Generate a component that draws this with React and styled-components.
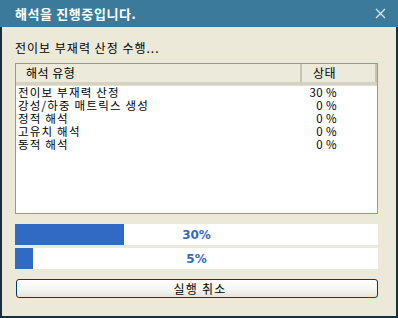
import styled, { createGlobalStyle } from 'styled-components'

const ROWS = [
  { name: '전이보 부재력 산정', status: '30 %' },
  { name: '강성/하중 매트릭스 생성', status: '0 %' },
  { name: '정적 해석', status: '0 %' },
  { name: '고유치 해석', status: '0 %' },
  { name: '동적 해석', status: '0 %' },
]

const KR = `"Noto Sans CJK KR", "DejaVu Sans", sans-serif`

const Global = createGlobalStyle`
  html, body { margin: 0; padding: 0; background: #ece9d8; }
`

const Window = styled.div`
  width: 398px;
  height: 318px;
  display: flex;
  flex-direction: column;
  font-family: ${KR};
  box-sizing: border-box;
`

const TitleBar = styled.div`
  height: 27px;
  flex: none;
  background: #3b7a9a;
  display: flex;
  align-items: center;
  justify-content: space-between;
  padding: 0 12px 1px 15px;
  box-sizing: border-box;
`

const Title = styled.span`
  color: #ffffff;
  font-size: 13px;
  font-weight: 700;
  letter-spacing: 0.6px;
`

const Body = styled.div`
  flex: 1;
  display: flex;
  flex-direction: column;
  background: #ece9d8;
  border: 2px solid #14313f;
  border-top: none;
  padding: 13px 18px 0 13px;
`

const Label = styled.div`
  font-size: 12px;
  line-height: 16px;
  letter-spacing: 1px;
  color: #000;
  height: 23px;
`

const ListBox = styled.div`
  height: 149px;
  background: #fff;
  border: 1px solid #7f9db9;
  display: flex;
  flex-direction: column;
`

const Header = styled.div`
  height: 18px;
  display: flex;
  background: #ebeadb;
  border-bottom: 3px solid #d6d2c2;
  box-shadow: 0 1px 0 #e2decd;
  margin-bottom: 1px;
`

const HeadCell = styled.div`
  font-size: 12px;
  line-height: 18px;
  letter-spacing: 0.5px;
  color: #000;
  box-sizing: border-box;
  ${({ $wide }) => ($wide ? 'flex: 1; padding-left: 10px;' : 'width: 75px; padding-left: 11px;')}
  border-right: 2px solid #c7c5b2;
`

const Row = styled.div`
  display: flex;
  height: 13px;
  font-size: 11.5px;
  line-height: 13px;
  color: #000;
`

const NameCell = styled.div`
  flex: 1;
  padding-left: 2px;
  letter-spacing: 1.2px;
  white-space: nowrap;
`

const StatusCell = styled.div`
  width: 77px;
  text-align: right;
  padding-right: 40px;
  letter-spacing: 0.4px;
  box-sizing: border-box;
`

const Bar = styled.div`
  position: relative;
  height: 21px;
  background: #fff;
  margin-top: ${({ $top }) => $top}px;
`

const Fill = styled.div`
  height: 100%;
  background: #316ac5;
`

const BarText = styled.span`
  position: absolute;
  inset: 0;
  display: flex;
  align-items: center;
  justify-content: center;
  font-family: "DejaVu Sans", Tahoma, sans-serif;
  font-weight: 700;
  font-size: 12px;
  color: #316ac5;
`

const Button = styled.button`
  margin: 10px 0 0 1px;
  height: 19px;
  border: 1px solid #003c74;
  border-radius: 3px;
  background: linear-gradient(#ffffff, #f3f3ef 60%, #e6e4da);
  font-family: ${KR};
  font-size: 12px;
  color: #000;
  padding: 0 0 0 6px;
  letter-spacing: 1.2px;
`

const Close = () => (
  <svg width="11" height="11" viewBox="0 0 11 11">
    <path d="M1 1 L10 10 M10 1 L1 10" stroke="#d6e6ee" strokeWidth="1.3" />
  </svg>
)

export default function App() {
  return (
    <>
      <Global />
      <Window>
        <TitleBar>
          <Title>해석을 진행중입니다.</Title>
          <Close />
        </TitleBar>
        <Body>
          <Label>전이보 부재력 산정 수행...</Label>
          <ListBox>
            <Header>
              <HeadCell $wide>해석 유형</HeadCell>
              <HeadCell>상태</HeadCell>
            </Header>
            {ROWS.map((r) => (
              <Row key={r.name}>
                <NameCell>{r.name}</NameCell>
                <StatusCell>{r.status}</StatusCell>
              </Row>
            ))}
          </ListBox>
          <Bar $top={10}>
            <Fill style={{ width: '30%' }} />
            <BarText>30%</BarText>
          </Bar>
          <Bar $top={3}>
            <Fill style={{ width: '5%' }} />
            <BarText>5%</BarText>
          </Bar>
          <Button>실행 취소</Button>
        </Body>
      </Window>
    </>
  )
}
